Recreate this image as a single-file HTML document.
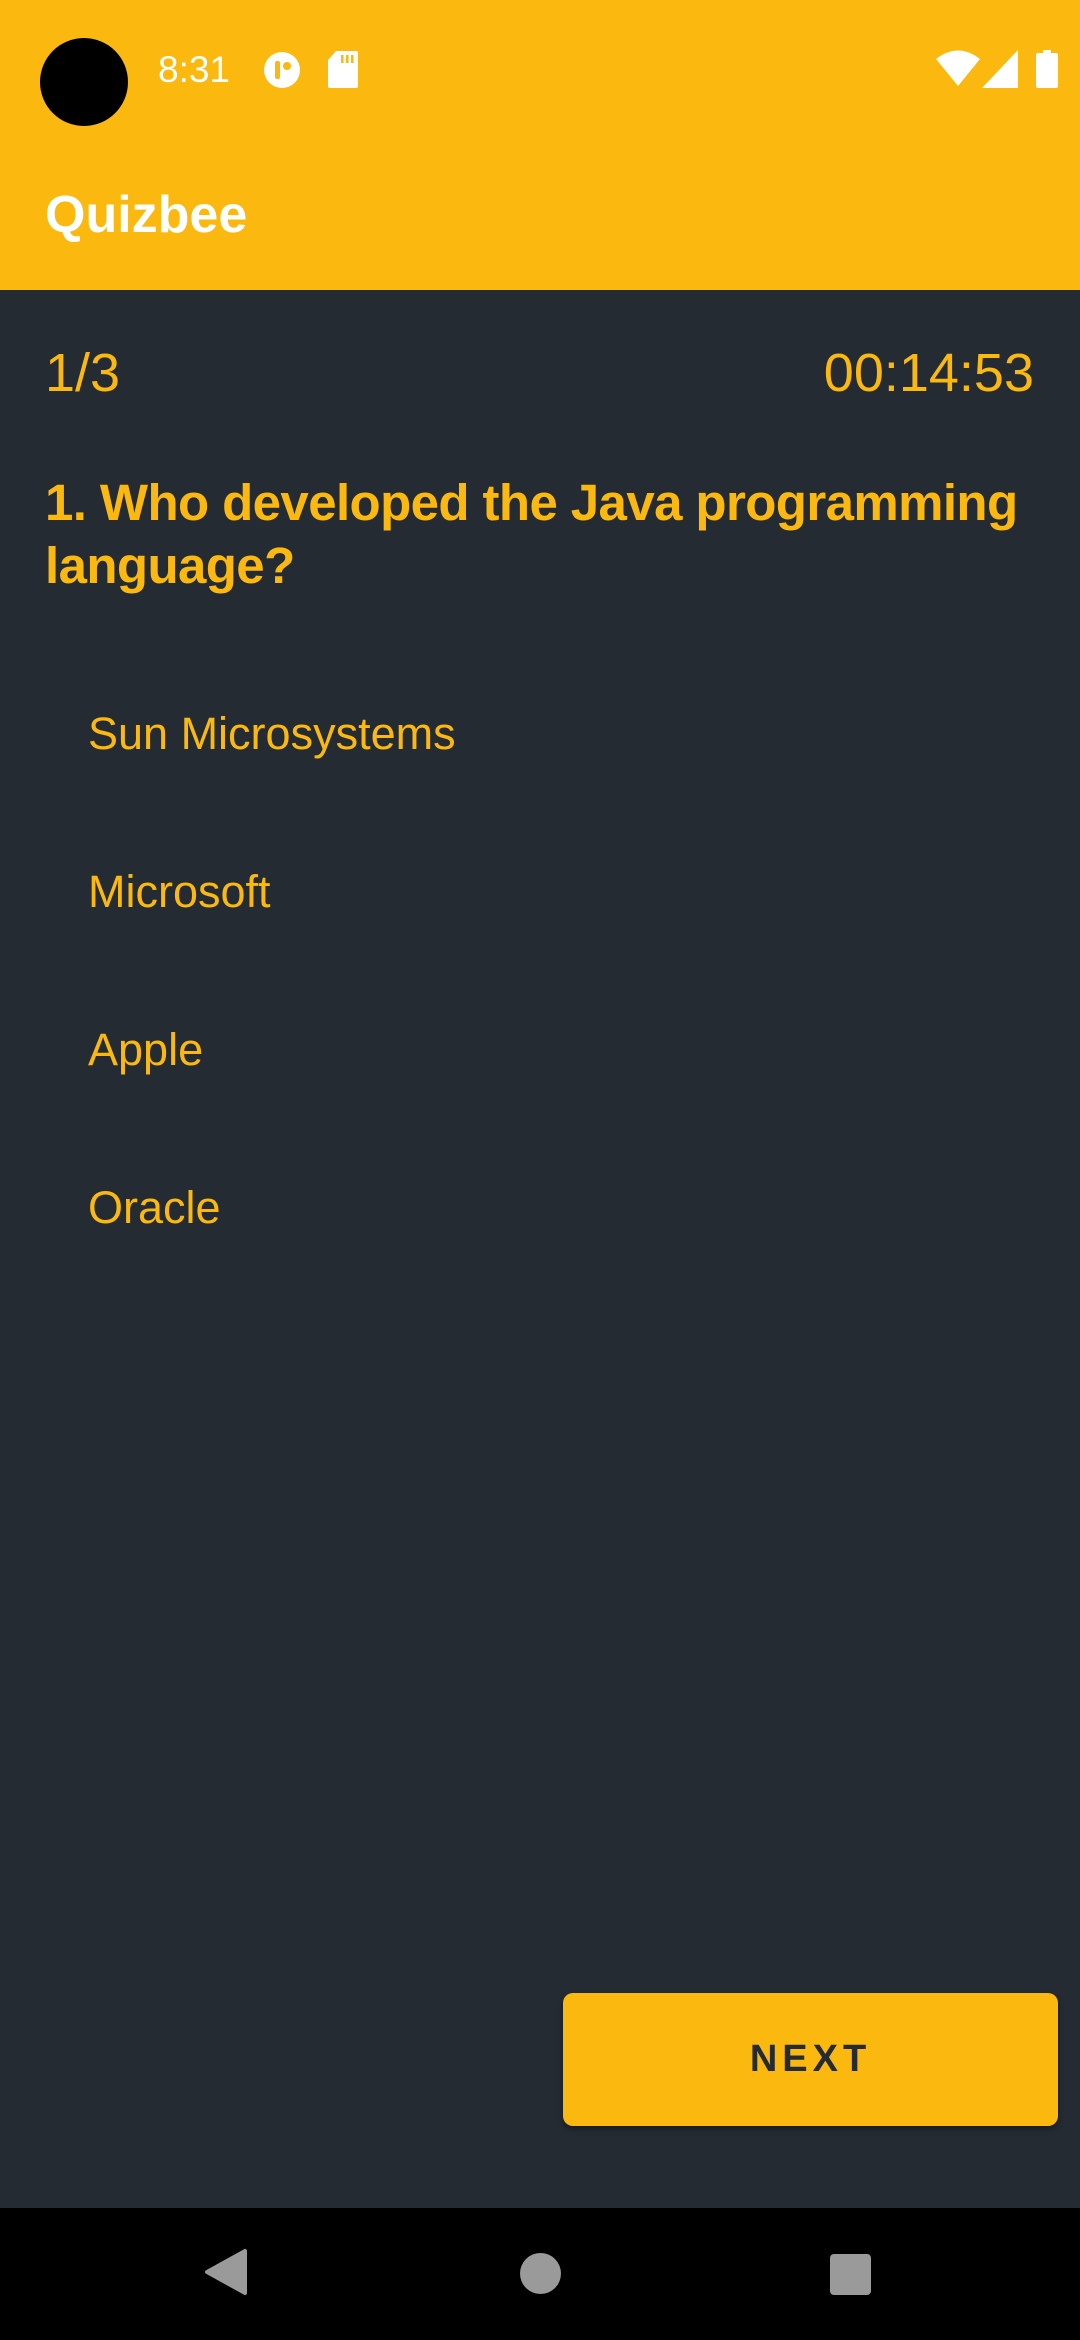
<!DOCTYPE html>
<html><head><meta charset="utf-8"><style>
*{margin:0;padding:0;box-sizing:border-box}
body{width:1080px;height:2340px;background:#242b33;font-family:"Liberation Sans",sans-serif;position:relative;overflow:hidden;color:#fbb90f}
.top{position:absolute;left:0;top:0;width:1080px;height:290px;background:#fbb90f}
.abs{position:absolute;white-space:nowrap}
</style></head><body>
<div class="top"></div>
<div class="abs" style="left:40px;top:38px;width:88px;height:88px;border-radius:50%;background:#000"></div>
<div class="abs" style="left:158px;top:48px;font-size:37px;color:#fff;line-height:44px">8:31</div>
<svg class="abs" style="left:262px;top:50px" width="40" height="40" viewBox="0 0 40 40"><circle cx="20" cy="20" r="18" fill="#fff"/><rect x="13" y="11" width="5" height="18" rx="2" fill="#fbb90f"/><circle cx="25" cy="16" r="4" fill="#fbb90f"/></svg>
<svg class="abs" style="left:328px;top:51px" width="30" height="37" viewBox="0 0 30 37"><path d="M8 0H28a2 2 0 0 1 2 2V35a2 2 0 0 1-2 2H2a2 2 0 0 1-2-2V9Z" fill="#fff"/><rect x="13" y="4" width="2.5" height="8" fill="#fbb90f"/><rect x="18" y="4" width="2.5" height="8" fill="#fbb90f"/><rect x="23" y="4" width="2.5" height="8" fill="#fbb90f"/></svg>
<svg class="abs" style="left:936px;top:50px" width="44" height="36" viewBox="0 0 44 36"><path d="M0 9Q22 -8 44 9L22 36Z" fill="#fff"/></svg>
<svg class="abs" style="left:982px;top:50px" width="36" height="38" viewBox="0 0 36 38"><path d="M36 0V38H0Z" fill="#fff"/></svg>
<svg class="abs" style="left:1036px;top:50px" width="22" height="38" viewBox="0 0 22 38"><rect x="7" y="0" width="8" height="4" fill="#fff"/><rect x="0" y="3" width="22" height="35" rx="2" fill="#fff"/></svg>
<div class="abs" style="left:45px;top:185px;font-size:52px;font-weight:bold;color:#fff;line-height:60px">Quizbee</div>

<div class="abs" style="left:45px;top:340px;font-size:54px;line-height:66px">1/3</div>
<div class="abs" style="right:46px;top:340px;font-size:54px;line-height:66px">00:14:53</div>
<div class="abs" style="left:45px;top:471px;font-size:51px;line-height:63px;white-space:normal;width:1020px;font-weight:bold;letter-spacing:-0.6px">1. Who developed the Java programming language?</div>
<div class="abs" style="left:88px;top:707px;font-size:45px;line-height:54px">Sun Microsystems</div>
<div class="abs" style="left:88px;top:865px;font-size:45px;line-height:54px">Microsoft</div>
<div class="abs" style="left:88px;top:1023px;font-size:45px;line-height:54px">Apple</div>
<div class="abs" style="left:88px;top:1181px;font-size:45px;line-height:54px">Oracle</div>

<div class="abs" style="left:563px;top:1993px;width:495px;height:133px;background:#fbb90f;border-radius:10px;box-shadow:0 3px 6px rgba(0,0,0,.35);color:#242b33;font-size:38px;font-weight:bold;letter-spacing:5px;text-align:center;line-height:133px">NEXT</div>

<div class="abs" style="left:0;top:2208px;width:1080px;height:132px;background:#000"></div>
<svg class="abs" style="left:203px;top:2249px" width="44" height="46" viewBox="0 0 44 46"><path d="M42 2V44L4 23Z" fill="#9a9a9a" stroke="#9a9a9a" stroke-width="4" stroke-linejoin="round"/></svg>
<div class="abs" style="left:520px;top:2253px;width:41px;height:41px;border-radius:50%;background:#9a9a9a"></div>
<div class="abs" style="left:830px;top:2254px;width:41px;height:41px;border-radius:4px;background:#9a9a9a"></div>
</body></html>
